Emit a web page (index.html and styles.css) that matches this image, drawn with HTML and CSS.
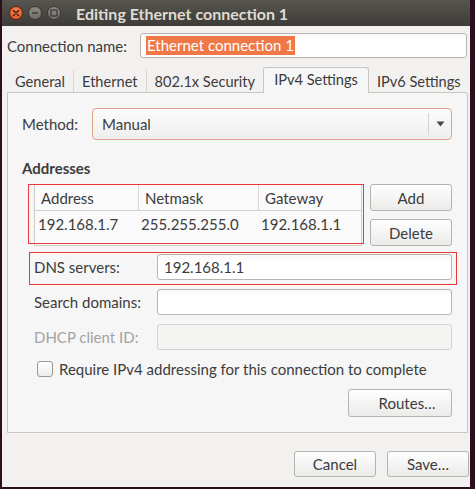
FILE: index.html
```html
<!DOCTYPE html>
<html>
<head>
<meta charset="utf-8">
<title>Editing Ethernet connection 1</title>
<link rel="stylesheet" href="styles.css">
</head>
<body>
<div class="window">
  <div class="titlebar">
    <div class="wbtns">
      <span class="wbtn close"><svg width="8" height="8" viewBox="0 0 8 8"><path d="M1.5 1.5L6.5 6.5M6.5 1.5L1.5 6.5" stroke="#3a1608" stroke-width="1.4" stroke-linecap="round"/></svg></span>
      <span class="wbtn min"><svg width="8" height="8" viewBox="0 0 8 8"><path d="M1 4H7" stroke="#3a3935" stroke-width="1.4"/></svg></span>
      <span class="wbtn max"><svg width="8" height="8" viewBox="0 0 8 8"><rect x="1" y="1" width="6" height="6" fill="none" stroke="#3a3935" stroke-width="1.2"/></svg></span>
    </div>
    <div class="title">Editing Ethernet connection 1</div>
  </div>
  <div class="content">
    <div class="name-row">
      <span class="name-label">Connection name:</span>
      <div class="entry name-entry"><span class="sel">Ethernet connection 1</span></div>
    </div>
    <div class="tabs">
      <div class="tab">General</div>
      <div class="tab sep">Ethernet</div>
      <div class="tab sep">802.1x Security</div>
      <div class="tab active">IPv4 Settings</div>
      <div class="tab">IPv6 Settings</div>
    </div>
    <div class="panel">
      <div class="method-row">
        <span class="method-label">Method:</span>
        <div class="combo">
          <span class="combo-text">Manual</span>
          <span class="combo-sep"></span>
          <span class="combo-arrow"><svg width="9" height="6" viewBox="0 0 9 6"><path d="M0.5 0.5H8.5L4.5 5.5Z" fill="#4a4a4a"/></svg></span>
        </div>
      </div>
      <div class="heading">Addresses</div>
      <div class="addr-block">
        <div class="tbl-wrap">
          <div class="tbl">
            <div class="th">Address</div>
            <div class="th colsep">Netmask</div>
            <div class="th colsep">Gateway</div>
            <div class="td">192.168.1.7</div>
            <div class="td">255.255.255.0</div>
            <div class="td">192.168.1.1</div>
          </div>
          <div class="mark tbl-mark"></div>
        </div>
        <div class="side-btns">
          <button class="btn side">Add</button>
          <button class="btn side">Delete</button>
        </div>
      </div>
      <div class="form">
        <div class="frow dns">
          <span class="flabel">DNS servers:</span>
          <div class="entry fentry">192.168.1.1</div>
          <div class="mark dns-mark"></div>
        </div>
        <div class="frow">
          <span class="flabel">Search domains:</span>
          <div class="entry fentry"></div>
        </div>
        <div class="frow">
          <span class="flabel disabled">DHCP client ID:</span>
          <div class="entry fentry off"></div>
        </div>
        <div class="check-row">
          <span class="checkbox"></span>
          <span class="check-text">Require IPv4 addressing for this connection to complete</span>
        </div>
      </div>
      <div class="routes-row">
        <button class="btn routes">Routes…</button>
      </div>
    </div>
    <div class="actions">
      <button class="btn act">Cancel</button>
      <button class="btn act">Save…</button>
    </div>
  </div>
</div>
</body>
</html>
```

FILE: styles.css
```css
* { box-sizing: border-box; }
html, body { margin: 0; padding: 0; }
body {
  width: 475px;
  height: 489px;
  overflow: hidden;
  background: #2e0d1e;
  font-family: Lato, "Open Sans", sans-serif;
  font-size: 15px;
  color: #3c3c3c;
}
.window {
  margin-left: 2px;
  width: 468px;
  height: 487px;
  background: #f2f1f0;
  display: flex;
  flex-direction: column;
}
.titlebar {
  height: 26px;
  flex: 0 0 26px;
  background: linear-gradient(#57554f, #3d3c38);
  display: flex;
  align-items: center;
}
.wbtns { display: flex; gap: 5px; margin-left: 7px; }
.wbtn {
  width: 14px;
  height: 14px;
  border-radius: 50%;
  display: flex;
  align-items: center;
  justify-content: center;
}
.close {
  background: radial-gradient(circle at 50% 35%, #f78a5c, #dc4a18);
  border: 1px solid #5e260f;
}
.min, .max {
  background: linear-gradient(#8d8b86, #6f6d68);
  border: 1px solid #3a3935;
}
.title {
  margin-left: 15px;
  font-weight: bold;
  color: #dfdbd2;
  font-size: 16px;
}
.content {
  flex: 1;
  padding: 7px 2px 0 5px;
  display: flex;
  flex-direction: column;
}
.name-row { display: flex; align-items: center; height: 25px; }
.name-label { flex: 0 0 133px; }
.entry {
  border: 1px solid #b9b6b1;
  border-radius: 3px;
  background: linear-gradient(#f7f7f7, #ffffff 30%);
  display: flex;
  align-items: center;
}
.name-entry {
  flex: 1;
  height: 25px;
  padding-left: 5px;
  margin-right: 1px;
}
.sel {
  background: #f07746;
  color: #ffffff;
  line-height: 19px;
  padding: 0 1px;
}
.tabs {
  margin-top: 9px;
  height: 25px;
  display: flex;
  align-items: flex-end;
  position: relative;
  z-index: 1;
  font-size: 14.6px;
}
.tab {
  height: 22px;
  padding: 0 8px;
  display: flex;
  align-items: center;
  white-space: nowrap;
}
.tab.sep { border-left: 1px solid #d9d6d1; }
.tab.active {
  height: 26px;
  margin-bottom: -1px;
  padding: 0 10px 2px;
  background: #f6f6f6;
  border: 1px solid #c9c6c1;
  border-bottom: none;
  border-radius: 3px 3px 0 0;
}
.panel {
  background: #f6f6f6;
  border: 1px solid #c9c6c1;
  border-radius: 0 3px 0 0;
  padding: 15px 15px 15px 14px;
  display: flex;
  flex-direction: column;
}
.method-row { display: flex; align-items: center; height: 32px; }
.method-label { flex: 0 0 70px; }
.combo {
  flex: 1;
  height: 32px;
  border: 1px solid #e0a388;
  border-radius: 4px;
  background: linear-gradient(#fbfbfb, #efefef);
  display: flex;
  align-items: center;
  padding-left: 9px;
}
.combo-text { flex: 1; }
.combo-sep { width: 1px; height: 22px; background: #d6d4d0; }
.combo-arrow {
  width: 22px;
  display: flex;
  justify-content: center;
  align-items: center;
}
.heading {
  margin-top: 18px;
  line-height: 20px;
  font-weight: bold;
}
.addr-block {
  margin-top: 6px;
  margin-left: 12px;
  display: flex;
  gap: 8px;
}
.tbl-wrap { position: relative; width: 329px; }
.tbl {
  height: 62px;
  border: 1px solid #cfcdc9;
  background: #fafafa;
  display: grid;
  grid-template-columns: 103px 120px 1fr;
  grid-template-rows: 26px 1fr;
}
.th {
  border-bottom: 1px solid #d3d1cd;
  padding-left: 6px;
  display: flex;
  align-items: center;
}
.th.colsep { border-left: 1px solid #d9d7d3; }
.td { padding: 4px 0 0 3px; line-height: 18px; }
.mark {
  position: absolute;
  border: 1px solid #e8393a;
  pointer-events: none;
}
.tbl-mark { left: -6px; right: -2px; top: 0; bottom: 2px; }
.side-btns { display: flex; flex-direction: column; gap: 8px; }
.btn {
  font-family: inherit;
  font-size: 15px;
  color: #3c3c3c;
  border: 1px solid #b5b3ae;
  border-radius: 3px;
  background: linear-gradient(#fefefe, #ebebea);
  box-shadow: inset 0 1px 0 #ffffff;
  padding: 0;
}
.btn.side { width: 82px; height: 27px; }
.form {
  margin-top: 8px;
  margin-left: 12px;
  display: flex;
  flex-direction: column;
  gap: 9px;
}
.frow {
  display: flex;
  align-items: center;
  height: 26px;
  position: relative;
}
.flabel { flex: 0 0 123px; }
.flabel.disabled { color: #a3a3a1; }
.fentry {
  flex: 1;
  height: 26px;
  padding-left: 6px;
}
.fentry.off {
  background: #f4f4f3;
  border-color: #d4d2ce;
}
.dns-mark { left: -5px; right: -5px; top: -2px; bottom: -5px; }
.check-row {
  margin-top: 1px;
  display: flex;
  align-items: center;
  height: 18px;
  margin-left: 3px;
}
.checkbox {
  width: 16px;
  height: 16px;
  border: 1px solid #9a9893;
  border-radius: 3px;
  background: linear-gradient(#ffffff, #ececeb);
  margin-right: 6px;
}
.routes-row {
  margin-top: 11px;
  display: flex;
  justify-content: flex-end;
}
.btn.routes { width: 104px; height: 28px; padding-left: 14px; }
.actions {
  margin-top: 18px;
  display: flex;
  justify-content: flex-end;
  gap: 11px;
  margin-right: -1px;
}
.btn.act { width: 82px; height: 26px; }
```
